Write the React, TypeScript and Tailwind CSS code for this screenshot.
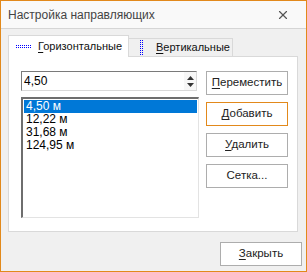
import { X } from "lucide-react";

const ui = { fontFamily: '"Liberation Sans", Arial, sans-serif' };

function Dots({ vertical }: { vertical?: boolean }) {
  const dots = [];
  for (let i = 0; i < 8; i++) {
    for (let r = 0; r < 2; r++) {
      dots.push(
        vertical ? (
          <rect key={`${i}-${r}`} x={r * 2} y={i * 2} width="1" height="1" fill="#0000ff" />
        ) : (
          <rect key={`${i}-${r}`} x={i * 2} y={r * 2} width="1" height="1" fill="#0000ff" />
        )
      );
    }
  }
  return vertical ? (
    <svg width="3" height="15" viewBox="0 0 3 15" shapeRendering="crispEdges">
      {dots}
    </svg>
  ) : (
    <svg width="15" height="3" viewBox="0 0 15 3" shapeRendering="crispEdges">
      {dots}
    </svg>
  );
}

function Btn({ label, hot, active }: { label: string; hot?: number; active?: boolean }) {
  const i = hot ?? -1;
  return (
    <button
      className={`w-[82px] h-[24px] bg-white text-[11.5px] text-[#222] border ${
        active ? "border-[#e2891b]" : "border-[#adadad]"
      }`}
      style={ui}
    >
      {i >= 0 ? (
        <>
          {label.slice(0, i)}
          <span className="underline underline-offset-2">{label[i]}</span>
          {label.slice(i + 1)}
        </>
      ) : (
        label
      )}
    </button>
  );
}

export default function App() {
  const items = ["4,50 м", "12,22 м", "31,68 м", "124,95 м"];
  return (
    <div className="w-[307px] h-[272px] border border-[#e2891b] bg-[#f0f0f0] flex flex-col">
      <div className="h-[28px] bg-[#f9f9f9] border-b border-[#d5d5d5] flex items-center justify-between pl-[7px] pr-[16px]">
        <span className="text-[12px] text-[#444]" style={ui}>
          Настройка направляющих
        </span>
        <X size={14} strokeWidth={2} className="text-[#555]" />
      </div>

      <div className="px-[7px] pt-[6px]">
        <div className="flex items-end relative z-10 -mb-px">
          <div className="w-[121px] h-[22px] bg-white border border-b-0 border-[#d9d9d9] flex items-center pl-[7px] gap-[7px]">
            <Dots />
            <span className="text-[11px] text-[#111]" style={ui}>
              <span className="underline underline-offset-2">Г</span>оризонтальные
            </span>
          </div>
          <div className="w-[104px] h-[19px] bg-[#f0f0f0] border border-l-0 border-[#d9d9d9] flex items-center pl-[11px] gap-[13px]">
            <Dots vertical />
            <span className="text-[11px] text-[#111]" style={ui}>
              <span className="underline underline-offset-2">В</span>ертикальные
            </span>
          </div>
        </div>

        <div className="w-[290px] h-[176px] bg-white border border-[#d9d9d9] flex pl-[12px] pt-[14px] gap-[7px]">
          <div className="flex flex-col gap-[6px]">
            <div className="w-[176px] h-[20px] border border-[#7a7a7a] border-r-[#d9d9d9] border-b-[#d9d9d9] flex items-center">
              <span className="flex-1 pl-[2px] text-[12px] text-black" style={ui}>
                4,50
              </span>
              <div className="w-[12px] h-full flex flex-col items-center justify-center gap-[3px] bg-[#f7f7f7]">
                <svg width="7" height="4" viewBox="0 0 7 4">
                  <path d="M3.5 0 L7 4 L0 4 Z" fill="#333" />
                </svg>
                <svg width="7" height="4" viewBox="0 0 7 4">
                  <path d="M0 0 L7 0 L3.5 4 Z" fill="#333" />
                </svg>
              </div>
            </div>
            <div className="w-[178px] h-[121px] border border-[#e3e3e3] border-l-[#6e6e6e] border-t-[#6e6e6e] border-l-2 border-t-2 pt-px px-px">
              {items.map((t, n) => (
                <div
                  key={t}
                  className={`h-[13px] leading-[13px] pl-[2px] text-[12px] ${
                    n === 0 ? "bg-[#0078d7] text-white" : "text-black"
                  }`}
                  style={ui}
                >
                  {t}
                </div>
              ))}
            </div>
          </div>
          <div className="flex flex-col gap-[7px]">
            <Btn label="Переместить" hot={0} />
            <Btn label="Добавить" hot={0} active />
            <Btn label="Удалить" hot={0} />
            <Btn label="Сетка..." />
          </div>
        </div>

        <div className="flex justify-end mt-[7px]">
          <div className="-mr-[3px]">
            <Btn label="Закрыть" hot={0} />
          </div>
        </div>
      </div>
    </div>
  );
}
